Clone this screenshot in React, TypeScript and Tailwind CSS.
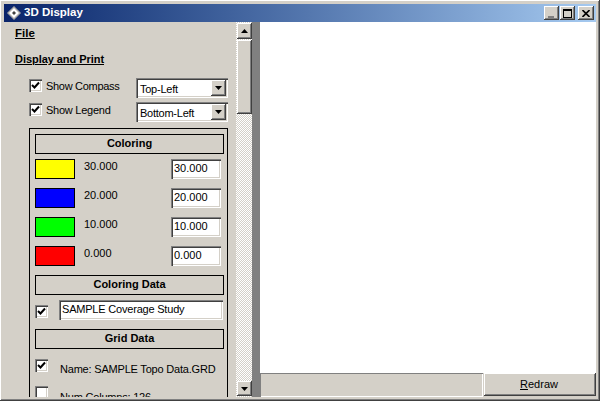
const raised = "shadow-[inset_-1px_-1px_0_#404040,inset_1px_1px_0_#ffffff,inset_-2px_-2px_0_#808080]";
const sunken = "shadow-[inset_1px_1px_0_#808080,inset_2px_2px_0_#404040,inset_-1px_-1px_0_#ffffff,inset_-2px_-2px_0_#d4d0c8]";

function Check({ on = true }: { on?: boolean }) {
  return (
    <div className={`w-[13px] h-[13px] shrink-0 bg-white flex items-center justify-center ${sunken}`}>
      {on && (
        <svg width="9" height="9" viewBox="0 0 9 9">
          <path d="M1 4 L3.5 6.5 L8 1.5" fill="none" stroke="#000" strokeWidth="2" />
        </svg>
      )}
    </div>
  );
}

function Arrow({ up = false }: { up?: boolean }) {
  return (
    <svg width="7" height="4" viewBox="0 0 7 4" className={up ? "rotate-180" : ""}>
      <path d="M0 0 H7 L3.5 4 Z" fill="#000" />
    </svg>
  );
}

function Select({ text }: { text: string }) {
  return (
    <div className={`w-[92px] h-[20px] bg-white flex items-center justify-between pl-[4px] pr-[2px] ${sunken}`}>
      <span className="text-[11px] tracking-[-0.25px] leading-[16px] mt-[1px] whitespace-nowrap">{text}</span>
      <div className={`w-[15px] h-[16px] bg-[#d4d0c8] flex items-center justify-center ${raised}`}>
        <Arrow />
      </div>
    </div>
  );
}

function Header({ text, className = "" }: { text: string; className?: string }) {
  return (
    <div className={`h-[20px] border border-black flex items-center justify-center pb-[1px] font-bold text-[11px] whitespace-nowrap ${className}`}>
      {text}
    </div>
  );
}

function ColorRow({ color, value, className = "" }: { color: string; value: string; className?: string }) {
  return (
    <div className={`flex h-[20px] text-[11px] ${className}`}>
      <div className="w-[40px] h-[20px] border border-black" style={{ backgroundColor: color }} />
      <div className="ml-[9px] leading-[14px] w-[87px]">{value}</div>
      <div className={`w-[50px] h-[20px] bg-white pl-[3px] leading-[19px] ${sunken}`}>{value}</div>
    </div>
  );
}

function Caption({ children, className = "" }: { children: React.ReactNode; className?: string }) {
  return (
    <div className={`h-[14px] bg-[#d4d0c8] flex items-center justify-center ${raised} ${className}`}>
      {children}
    </div>
  );
}

export default function App() {
  return (
    <div
      className="w-[600px] h-[401px] p-[4px] bg-[#d4d0c8] flex flex-col text-black overflow-hidden shadow-[inset_-1px_-1px_0_#404040,inset_1px_1px_0_#ffffff,inset_-2px_-2px_0_#808080]"
      style={{ fontFamily: '"Liberation Sans", Arial, sans-serif' }}
    >
      <div className="h-[18px] shrink-0 flex items-center bg-gradient-to-r from-[#0a246a] to-[#a6caf0] text-white">
        <svg width="14" height="14" viewBox="0 0 14 14" className="ml-[3px]">
          <path d="M7 0 L14 7 L7 14 L0 7 Z" fill="#a8a8a8" />
          <path d="M7 2 L12 7 L7 12 L2 7 Z" fill="#ffffff" />
          <path d="M7 5 L9 7 L7 9 L5 7 Z" fill="#404040" />
        </svg>
        <span className="ml-[3px] text-[11.5px] font-bold whitespace-nowrap">3D Display</span>
        <div className="ml-auto flex items-center mr-[2px]">
          <Caption className="w-[15px]">
            <div className="w-[6px] h-[2px] bg-[#808080] mt-[7px] mr-[2px]" />
          </Caption>
          <Caption className="w-[15px] ml-[1px]">
            <div className="w-[9px] h-[9px] border border-black border-t-2" />
          </Caption>
          <Caption className="w-[16px] ml-[3px]">
            <svg width="8" height="7" viewBox="0 0 8 7">
              <path d="M0.5 0 L7.5 7 M7.5 0 L0.5 7" stroke="#000" strokeWidth="1.6" />
            </svg>
          </Caption>
        </div>
      </div>

      <div className="flex-1 flex min-h-0">
        {/* Left scroll panel */}
        <div className="w-[232px] shrink-0 overflow-hidden pt-[4px] text-[11px]">
          <div className="pl-[11px] font-bold underline leading-[14px] text-[11.5px]">File</div>
          <div className="pl-[11px] mt-[12px] font-bold underline leading-[14px] tracking-[-0.05px]">Display and Print</div>
          <div className="pl-[25px] mt-[12px] flex h-[20px]">
            <div className="mt-[1px]"><Check /></div>
            <div className="ml-[4px] w-[90px] leading-[14px] mt-[1px] tracking-[-0.3px] whitespace-nowrap">Show Compass</div>
            <Select text="Top-Left" />
          </div>
          <div className="pl-[25px] mt-[4px] flex h-[20px]">
            <div className="mt-[1px]"><Check /></div>
            <div className="ml-[4px] w-[90px] leading-[14px] mt-[1px] tracking-[-0.25px] whitespace-nowrap">Show Legend</div>
            <Select text="Bottom-Left" />
          </div>
          <div className="ml-[25px] mt-[6px] w-[199px] border border-black pl-[5px] pr-[3px] pt-[5px] h-[300px]">
            <Header text="Coloring" />
            <ColorRow color="#ffff00" value="30.000" className="mt-[5px]" />
            <ColorRow color="#0000ff" value="20.000" className="mt-[9px]" />
            <ColorRow color="#00ff00" value="10.000" className="mt-[9px]" />
            <ColorRow color="#ff0000" value="0.000" className="mt-[9px]" />
            <Header text="Coloring Data" className="mt-[9px]" />
            <div className="mt-[5px] flex h-[20px]">
              <div className="mt-[5px]"><Check /></div>
              <div className={`ml-[11px] w-[164px] h-[20px] bg-white pl-[3px] leading-[19px] tracking-[-0.2px] whitespace-nowrap ${sunken}`}>SAMPLE Coverage Study</div>
            </div>
            <Header text="Grid Data" className="mt-[9px]" />
            <div className="mt-[10px] flex">
              <Check />
              <div className="ml-[12px] mt-[3px] leading-[14px] tracking-[-0.2px] whitespace-nowrap">Name: SAMPLE Topo Data.GRD</div>
            </div>
            <div className="mt-[10px] flex">
              <Check on={false} />
              <div className="ml-[12px] mt-[4px] leading-[14px] tracking-[-0.2px] whitespace-nowrap">Num Columns: 126</div>
            </div>
          </div>
        </div>

        {/* Scrollbar */}
        <div className="w-[16px] shrink-0 flex flex-col items-center py-[1px] bg-[repeating-conic-gradient(#d4d0c8_0_25%,#ffffff_0_50%)] bg-[length:2px_2px]">
          <div className={`w-[15px] h-[16px] shrink-0 bg-[#d4d0c8] flex items-center justify-center ${raised}`}>
            <Arrow up />
          </div>
          <div className={`w-[15px] h-[74px] shrink-0 mt-[1px] bg-[#d4d0c8] ${raised}`} />
          <div className={`w-[15px] h-[15px] shrink-0 mt-auto bg-[#d4d0c8] flex items-center justify-center ${raised}`}>
            <Arrow />
          </div>
        </div>

        {/* Splitter */}
        <div className="w-[8px] shrink-0 bg-[#808080]" />

        {/* Canvas */}
        <div className="flex-1 flex flex-col min-w-0">
          <div className="flex-1 bg-white" />
          <div className="h-[24px] shrink-0 flex">
            <div className="flex-1 bg-[#d4d0c8] shadow-[inset_1px_1px_0_#808080,inset_-1px_-1px_0_#ffffff]" />
            <div className={`w-[112px] h-[23px] ml-[1px] pr-[2px] bg-[#d4d0c8] flex items-center justify-center text-[11px] ${raised}`}>
              <span><span className="underline">R</span>edraw</span>
            </div>
          </div>
        </div>
      </div>
    </div>
  );
}
